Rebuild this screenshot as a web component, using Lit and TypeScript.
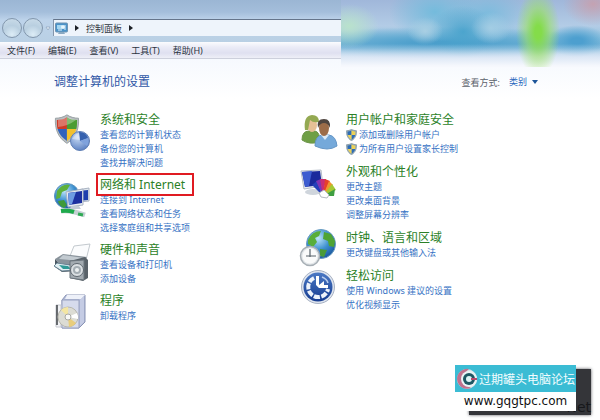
import { LitElement, html, css, svg, TemplateResult } from "lit";
import { customElement, property } from "lit/decorators.js";

const shieldPaths = svg`
  <path d="M18 1C13 4 7 5 2 5C1 17 5 28 18 35C31 28 35 17 34 5C29 5 23 4 18 1Z" fill="#b9bfc2" stroke="#8b9498"/>
  <path d="M18 4C13 7 9 7 4 7C4 12 4 15 5 18H18Z" fill="#cf3a26"/>
  <path d="M18 4C23 7 27 7 32 7C32 12 32 15 31 18H18Z" fill="#4c9c33"/>
  <path d="M5 18H18V32C11 28 7 24 5 18Z" fill="#2f62bd"/>
  <path d="M31 18H18V32C25 28 29 24 31 18Z" fill="#f2c02c"/>`;

const icons: Record<string, TemplateResult> = {
  security: svg`
    <g transform="scale(.72 .84)">${shieldPaths}</g>
    <path d="M4 6Q12 5 13 3Q18 5 22 6Q14 12 4 13Z" fill="#fff" opacity=".3"/>
    <circle cx="26" cy="27" r="9.5" fill="url(#disc)" stroke="#5f7fb4"/>
    <path d="M26 27L25 18A9 9 0 0 1 34 24Z" fill="#3561ae"/>
    <path d="M26 27L34 24A9 9 0 0 1 33 32Z" fill="#7fa2dc"/>
    <path d="M18 25Q22 19 25 19L26 26Z" fill="#fff" opacity=".4"/>`,
  network: svg`
    <g transform="translate(0 3)">
      <circle cx="13" cy="14" r="12.500" fill="url(#globe)" stroke="#5c93bd"/>
      <path d="M3 9Q9 1 16 3L13 8L8 10L6 16L2 17Z" fill="#5db13c"/>
      <path d="M4 19L10 18L13 23L10 26Q5 24 4 19Z" fill="#3f9a3a"/>
      <path d="M23 8L35 6V19L23 20Z" fill="#dfe6ed" stroke="#a9b3c2"/>
      <path d="M24 9L34 8V18L24 19Z" fill="#1f3fae"/>
      <path d="M12 10L29 7V23L14 25Z" fill="#e7edf3" stroke="#a9b3c2"/>
      <path d="M14 11L28 9V21L15 23Z" fill="#1c30a0"/>
      <path d="M14 11L22 10L18 22L15 23Z" fill="#6d9be2"/>
      <path d="M17 24H25L27 27H16Z" fill="#c2cbd6"/>
      <path d="M7 29Q16 28 31 33" fill="none" stroke="#c5d0d3" stroke-width="5"/>
      <path d="M7 29Q14 28 20 30" fill="none" stroke="#1faa4c" stroke-width="4"/>
      <path d="M24 32L29 33" stroke="#2faa54" stroke-width="3"/>
    </g>`,
  hardware: svg`
    <path d="M20 2L36 0L32 16L16 12Z" fill="#fbfcfd" stroke="#c3c9ce"/>
    <path d="M1 15L9 10L33 13L27 20L6 20Z" fill="#89939b"/>
    <path d="M1 15L6 20H24V27L8 28L1 23Z" fill="#4c5963"/>
    <path d="M9 11L30 14L27 17L5 15Z" fill="#c2cad0"/>
    <path d="M3 19L16 21L21 26L8 27L0 22Z" fill="#e2f0f4" stroke="#6a8493"/>
    <path d="M5 21L14 22L17 25L9 25Z" fill="#2f9a96"/>
    <path d="M16 17L31 13L34 16V34L29 37L16 34Z" fill="#596269"/>
    <path d="M16 17L30 16V36L16 34Z" fill="#a2aab0" stroke="#6b757d"/>
    <circle cx="23" cy="26" r="6.500" fill="#dbe0e3" stroke="#5e676f"/>
    <circle cx="23" cy="26" r="4" fill="#a4adb3"/>
    <circle cx="23" cy="26" r="2" fill="#eef1f2"/>`,
  programs: svg`
    <path d="M8 5L12 0H31V27L25 33H8Z" fill="#b2bbd8" stroke="#8a94b5"/>
    <path d="M11 4H27L31 0H13Z" fill="#eef1f9"/>
    <path d="M8 5H25V33H8Z" fill="#d6dbec" stroke="#98a1bf"/>
    <path d="M26 5L30 1V27L26 31Z" fill="#c5cce4"/>
    <path d="M2 10H7V32H2Z" fill="#f1f2f5" stroke="#c6c9d0"/>
    <path d="M3 10V30" stroke="#3c4045" stroke-width="1.500"/>
    <circle cx="14" cy="22" r="10" fill="#dcdcd4" stroke="#b7b7ae"/>
    <path d="M14 22L7 15A10 10 0 0 1 14 12Z" fill="#f4e6a2"/>
    <path d="M14 22L22 28A10 10 0 0 1 15 32Z" fill="#e8cd7c"/>
    <path d="M14 22L23 18A10 10 0 0 1 24 24Z" fill="#fff"/>
    <circle cx="14" cy="22" r="3" fill="#f9f9f7" stroke="#a9a9a4"/>`,
  users: svg`
    <g transform="translate(1 1)">
      <path d="M1 25Q1 16 8 16H14Q19 17 19 27Q8 30 1 25Z" fill="#6f9f45" stroke="#6c9449"/>
      <ellipse cx="11" cy="10" rx="5" ry="7" fill="#e6c096"/>
      <path d="M4 15Q2 1 11 0Q18 0 18 7Q12 8 9 5Q8 10 7 15Z" fill="#94a952"/>
      <path d="M14 31Q14 21 21 20H28Q35 21 36 31Q27 37 14 31Z" fill="#75a9da" stroke="#6596c6"/>
      <path d="M20 20L24 25L28 20Z" fill="#dceaf6"/>
      <ellipse cx="23" cy="13" rx="5" ry="8" fill="#9c6c48"/>
      <path d="M17 13Q15 4 23 4Q30 4 29 13Q27 8 23 8Q19 8 17 13Z" fill="#4f453f"/>
    </g>`,
  appearance: svg`
    <g transform="translate(0 2)">
      <path d="M1 3L21 2L23 18L4 21Z" fill="#e8ecf1" stroke="#b4bcc8"/>
      <path d="M2 4L20 3L22 17L5 19Z" fill="#1a2a9c"/>
      <path d="M2 4L12 3L9 18L5 19Z" fill="#3c5cd0"/>
      <ellipse cx="13" cy="24" rx="8" ry="3" fill="#cfd5dc"/>
      <path d="M23 28L12 17L17 13Z" fill="#2540b9"/>
      <path d="M23 28L16 13L21 11Z" fill="#7f35b4"/>
      <path d="M23 28L20 11L26 11Z" fill="#c92e74"/>
      <path d="M23 28L25 11L30 13Z" fill="#e6402c"/>
      <path d="M23 28L29 13L33 17Z" fill="#f0962c"/>
      <path d="M23 28L32 16L36 22Z" fill="#a5c934"/>
      <path d="M23 28L35 21L34 28Z" fill="#3f9f41"/>
      <path d="M19 25L24 22L29 27L27 30L21 29Z" fill="#fff" stroke="#b4b9c0"/>
    </g>`,
  clock: svg`
    <g transform="translate(0 -3)">
      <circle cx="21" cy="15" r="14.500" fill="url(#globe)" stroke="#6a9cc0"/>
      <path d="M8 11Q12 2 21 2L19 7L15 9L17 13L13 18L8 15Z" fill="#58ae3a"/>
      <path d="M24 3L31 5L35 12L34 18L29 17L28 12L23 10Z" fill="#4fa434"/>
      <path d="M20 20L27 21L24 28L20 27Z" fill="#499b38"/>
      <circle cx="10" cy="27" r="9.500" fill="#e3e7ea" stroke="#a7afb5" stroke-width="1.500"/>
      <circle cx="10" cy="27" r="7.500" fill="#fafbfb"/>
      <path d="M10 20V28M6 27H16" fill="none" stroke="#59636b" stroke-width="1.200"/>
    </g>`,
  access: svg`
    <circle cx="18" cy="17" r="16.500" fill="#dfe5ef" stroke="#a8b2c4"/>
    <circle cx="18" cy="17" r="14.500" fill="url(#blue)"/>
    <path d="M14 8A10 10 0 1 0 28 19" fill="none" stroke="#eef3fb" stroke-width="4" stroke-dasharray="6 1.500"/>
    <path d="M16 6H19V15L24 11V15H28V18H19L16 15Z" fill="#fff"/>
    <path d="M22 7Q27 9 28 13" fill="none" stroke="#b9cdee" stroke-width="1.500"/>`,
};

interface Category {
  icon: string;
  title: string;
  links: string[];
  marked?: boolean;
  shielded?: boolean;
}

const leftColumn: Category[] = [
  { icon: "security", title: "系统和安全", links: ["查看您的计算机状态", "备份您的计算机", "查找并解决问题"] },
  { icon: "network", title: "网络和 Internet", links: ["连接到 Internet", "查看网络状态和任务", "选择家庭组和共享选项"], marked: true },
  { icon: "hardware", title: "硬件和声音", links: ["查看设备和打印机", "添加设备"] },
  { icon: "programs", title: "程序", links: ["卸载程序"] },
];

const rightColumn: Category[] = [
  { icon: "users", title: "用户帐户和家庭安全", links: ["添加或删除用户帐户", "为所有用户设置家长控制"], shielded: true },
  { icon: "appearance", title: "外观和个性化", links: ["更改主题", "更改桌面背景", "调整屏幕分辨率"] },
  { icon: "clock", title: "时钟、语言和区域", links: ["更改键盘或其他输入法"] },
  { icon: "access", title: "轻松访问", links: ["使用 Windows 建议的设置", "优化视频显示"] },
];

@customElement("category-item")
class CategoryItem extends LitElement {
  @property({ attribute: false }) item!: Category;

  static styles = css`
    :host { display: flex; gap: 8px; align-items: flex-start; }
    .icon { flex: none; width: 38px; height: 38px; margin: 2px 0 -10px; overflow: visible; }
    .title { margin: 0; font-size: 12px; line-height: 16px; font-weight: 400; white-space: nowrap; }
    .title a { color: #2b7f27; text-decoration: none; }
    .marked { position: relative; }
    .marked::after {
      content: ""; position: absolute; inset: -3px -9px -3px -4px;
      border: 2px solid #e01b22; pointer-events: none;
    }
    .links { list-style: none; margin: 0; padding: 0; font-size: 9px; line-height: 14px; white-space: nowrap; }
    .link { display: flex; align-items: center; gap: 2px; height: 14px; }
    .link a { color: #3672c4; text-decoration: none; }
    .shield { width: 11px; height: 12px; }
    a:hover { text-decoration: underline; }
  `;

  render() {
    const { icon, title, links, marked, shielded } = this.item;
    return html`
      <svg class="icon" viewBox="0 0 38 38" aria-hidden="true">
        <defs>
          <radialGradient id="globe" cx=".4" cy=".3" r=".8">
            <stop offset="0" stop-color="#bfe6fa"/><stop offset=".5" stop-color="#3c8fd0"/><stop offset="1" stop-color="#134a94"/>
          </radialGradient>
          <radialGradient id="disc" cx=".4" cy=".3" r=".8">
            <stop offset="0" stop-color="#c9dcf5"/><stop offset="1" stop-color="#5077bd"/>
          </radialGradient>
          <linearGradient id="blue" x2="0" y2="1">
            <stop offset="0" stop-color="#4a78c4"/><stop offset="1" stop-color="#173d91"/>
          </linearGradient>
        </defs>
        ${icons[icon]}
      </svg>
      <div>
        <h2 class="title"><a class=${marked ? "marked" : ""} href="#">${title}</a></h2>
        <ul class="links">
          ${links.map((text) => html`<li class="link">
            ${shielded ? html`<svg class="shield" viewBox="0 0 36 36" preserveAspectRatio="none" aria-hidden="true">${svg`
              <path d="M18 1C13 4 7 5 2 5C1 17 5 28 18 35C31 28 35 17 34 5C29 5 23 4 18 1Z" fill="#8fa6b4" stroke="#8c9faa" stroke-width="3"/>
              <path d="M18 4C13 7 9 8 5 8L6 18H18ZM30 18H18V32C25 28 28 24 30 18Z" fill="#2c6bb5"/>
              <path d="M18 4C23 7 27 8 31 8L30 18H18ZM6 18H18V32C11 28 8 24 6 18Z" fill="#ecd256"/>`}</svg>` : ""}
            <a href="#">${text}</a></li>`)}
        </ul>
      </div>`;
  }
}

@customElement("app-root")
class AppRoot extends LitElement {
  static styles = css`
    :host {
      display: block; position: relative; min-height: 100vh; overflow: hidden;
      background: #fff;
      font-family: "Noto Sans", "Noto Sans CJK SC", sans-serif; font-size: 9px; color: #2b3340;
    }
    button, select { font: inherit; color: inherit; border: 0; background: none; padding: 0; margin: 0; }
    .bar {
      display: flex; align-items: center; gap: 1px; box-sizing: border-box;
      height: 42px; padding: 13px 0 0 2px;
      background: linear-gradient(#9bb6d4, #a4bedb 12px, #bdd3ea 20px, #b9d0e4);
    }
    .round {
      box-sizing: border-box; width: 20px; height: 20px; border-radius: 50%; border: 1px solid #8297ad;
      background: radial-gradient(circle at 50% 85%, #dcecf6, #b9cfe0 50%, #cddeeb);
    }
    .recent { width: 8px; height: 10px; }
    .recent svg { display: block; }
    .address {
      flex: 1; display: flex; align-items: center; gap: 7px; box-sizing: border-box;
      height: 17px; padding-left: 1px;
      border-top: 1px solid #65758b; border-left: 1px solid #8596ab; background: #eef4fb;
    }
    .address a { color: #30363f; text-decoration: none; }
    .menu {
      display: flex; gap: 13px; box-sizing: border-box; height: 17px; padding-left: 7px;
      border-bottom: 1px solid #cdd0dc;
      background: linear-gradient(#fbfcfe, #ebecf7 5px, #dfe0f0 11px, #eeeff7);
    }
    .page { padding: 13px 54px; background: linear-gradient(#f6f9fe, #fff 40px); }
    .heading { display: flex; justify-content: space-between; align-items: center; margin-bottom: 20px; }
    .heading h1 { margin: 0; font-size: 12px; line-height: 20px; font-weight: 400; color: #2f57a6; }
    .view { display: flex; align-items: center; gap: 9px; padding-right: 8px; color: #5c626c; }
    .choice { display: flex; align-items: center; gap: 4px; }
    .choice select { appearance: none; color: #2a68bd; line-height: 14px; }
    .columns { display: flex; }
    .column { flex: 1; display: flex; flex-direction: column; gap: 7px; }
    .right { gap: 8px; }
    .smear {
      position: absolute; top: 0; right: 0; width: 259px; height: 67px; overflow: hidden;
      background:
        radial-gradient(ellipse 22px 44px at 197px 32px, #84dc4a 15%, #9ae06499 55%, transparent),
        linear-gradient(transparent 44px, #dfe8f6c0 56px, #f6f8fd 66px),
        radial-gradient(ellipse 30px 22px at 252px 4px, #cf9aa4c0, transparent),
        radial-gradient(ellipse 30px 16px at 236px 41px, #4d9fcf 20%, transparent),
        radial-gradient(ellipse 30px 22px at 8px 26px, #b9e2cc, transparent),
        radial-gradient(ellipse 18px 14px at 84px 31px, #a9cfe3, transparent),
        radial-gradient(ellipse 20px 16px at 150px 28px, #a3cde4, transparent),
        radial-gradient(ellipse 34px 26px at 122px 32px, #4ba4cd, transparent),
        radial-gradient(ellipse 46px 30px at 94px 12px, #74bbdc, transparent),
        radial-gradient(ellipse 44px 28px at 146px 14px, #7cbbdd, transparent),
        radial-gradient(ellipse 170px 16px at 100px 43px, #4b9ecb 10%, transparent),
        linear-gradient(#a0b7da, #b3cce6 26px, #8fc3e0 38px, #78b5d8 48px, #c3dbee 57px);
    }
    .stamp { position: absolute; right: 24px; bottom: 9px; width: 121px; z-index: 1; background: #fff; color: #000; }
    .shade {
      position: absolute; right: 9px; bottom: 5px; width: 122px; height: 46px; box-sizing: border-box;
      background: #343539; box-shadow: 0 0 3px #55565b;
      font: 14px/16px "DejaVu Sans", sans-serif; color: #17181b;
      display: flex; align-items: flex-end; justify-content: flex-end;
    }
    .brand {
      display: flex; align-items: center; gap: 1px; height: 27px; padding-left: 1px;
      background: #3bbcd4; color: #f2fcff; font-size: 12px; white-space: nowrap;
    }
    .brand svg { flex: none; }
    .site {
      display: block; line-height: 19px; text-align: center; text-decoration: none; color: #111;
      font-family: "DejaVu Sans", sans-serif; font-size: 12px;
    }
  `;

  render() {
    const arrow = html`<svg width="4" height="6" viewBox="0 0 4 6" aria-hidden="true"><path d="M0 0L4 3L0 6Z" fill="#1c2026"/></svg>`;
    return html`
      <header>
        <div class="bar">
          <button class="round" aria-label="后退"></button>
          <button class="round" aria-label="前进"></button>
          <button class="recent" aria-label="最近">
            <svg width="8" height="10" viewBox="0 0 8 10"><path d="M2 4H6L4 7Z" fill="#e8f1f9" stroke="#8fa5bd" stroke-width=".7"/></svg>
          </button>
          <nav class="address">
            <svg width="13" height="13" viewBox="0 0 13 13" aria-hidden="true">
              <rect x=".5" y="1" width="12" height="9" rx="1" fill="#4a93c9" stroke="#6f94b3"/>
              <path d="M2 3H7V7H2Z" fill="#a6d7f2"/><circle cx="8" cy="5" r="2" fill="#e6f6fd"/>
              <path d="M10 3V8M3 8H7" stroke="#e0f1fb"/><path d="M4 10H9L10 12H3Z" fill="#8aa9c2"/>
            </svg>
            ${arrow}<a href="#">控制面板</a>${arrow}
          </nav>
        </div>
        <nav class="menu">
          ${["文件(F)", "编辑(E)", "查看(V)", "工具(T)", "帮助(H)"].map((m) => html`<button>${m}</button>`)}
        </nav>
      </header>
      <main class="page">
        <div class="heading">
          <h1>调整计算机的设置</h1>
          <div class="view">
            <label for="view">查看方式:</label>
            <span class="choice">
              <select id="view"><option>类别</option></select>
              <svg width="6" height="4" viewBox="0 0 6 4" aria-hidden="true"><path d="M0 0H6L3 4Z" fill="#1d5599"/></svg>
            </span>
          </div>
        </div>
        <div class="columns">
          <div class="column">${leftColumn.map((c) => html`<category-item .item=${c}></category-item>`)}</div>
          <div class="column right">${rightColumn.map((c) => html`<category-item .item=${c}></category-item>`)}</div>
        </div>
      </main>
      <div class="smear"></div>
      <div class="shade">Net</div>
      <aside class="stamp">
        <div class="brand">
          <svg width="22" height="22" viewBox="0 0 22 22" aria-hidden="true">
            <circle cx="11" cy="11" r="10" fill="#d9e3e8"/>
            <path d="M13 1A10 10 0 1 0 15 20A11 11 0 0 1 13 1Z" fill="#c0718e"/>
            <circle cx="13" cy="11" r="8" fill="#e9f3f5"/>
            <circle cx="13" cy="11" r="6" fill="#1d5763"/>
            <circle cx="13" cy="11" r="3" fill="#dff3f5"/>
            <path d="M15 10H21V12H15Z" fill="#b4476c"/>
          </svg>
          <span>过期罐头电脑论坛</span>
        </div>
        <a class="site" href="#">www.gqgtpc.com</a>
      </aside>`;
  }
}
